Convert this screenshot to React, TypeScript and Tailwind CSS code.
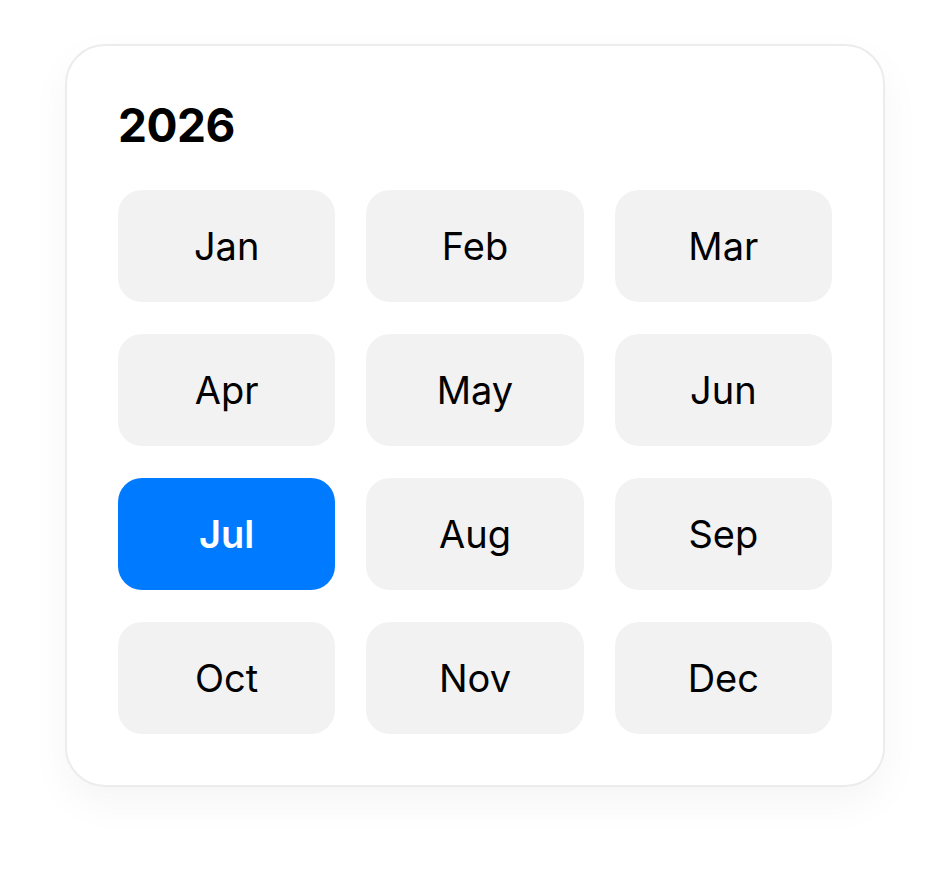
const months = ["Jan", "Feb", "Mar", "Apr", "May", "Jun", "Jul", "Aug", "Sep", "Oct", "Nov", "Dec"];

const MonthPicker = () => {
  const selected = "Jul";
  return (
    <div className="w-[820px] rounded-[40px] border-2 border-[#ececec] bg-white px-[51px] pt-[51px] pb-[51px] shadow-[0_16px_40px_rgba(0,0,0,0.045)]">
      <h1 className="text-[46px] font-bold leading-[56px] text-black tracking-[-0.5px]">2026</h1>
      <div className="mt-[37px] grid grid-cols-3 gap-x-[31px] gap-y-[32px]">
        {months.map((m) => {
          const active = m === selected;
          return (
            <button
              key={m}
              className={
                active
                  ? "h-[112px] rounded-[24px] bg-[#007aff] text-[38px] font-semibold text-white"
                  : "h-[112px] rounded-[24px] bg-[#f2f2f2] text-[38px] font-normal text-black"
              }
            >
              {m}
            </button>
          );
        })}
      </div>
    </div>
  );
};

export default function App() {
  return (
    <div
      className="min-h-[872px] w-[950px] bg-white pt-[44px] pl-[65px]"
      style={{ fontFamily: "Inter, 'Noto Sans', sans-serif" }}
    >
      <MonthPicker />
    </div>
  );
}
